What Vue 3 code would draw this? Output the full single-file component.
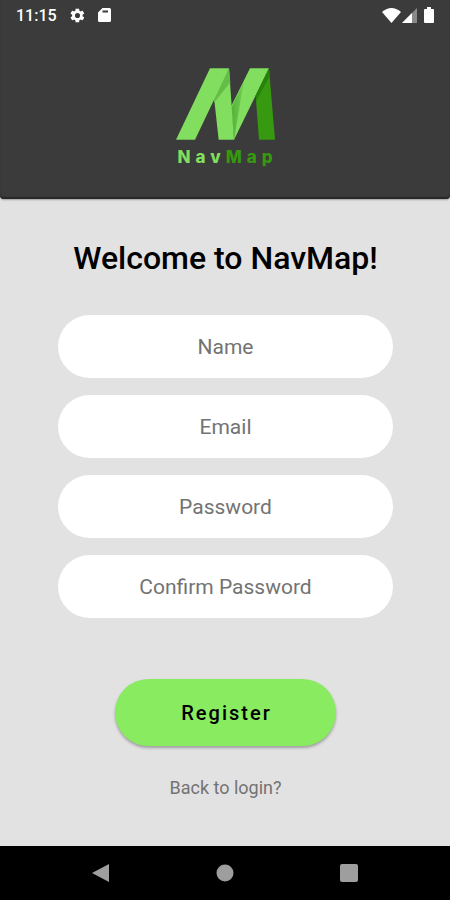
<template>
  <div class="screen">
    <header class="top">
      <div class="status-bar">
        <div class="status-left">
          <span class="clock">11:15</span>
          <svg class="icon" viewBox="0 0 24 24" aria-hidden="true">
            <path
              d="M19.1 12.9c0-.3.1-.6.1-.9s0-.6-.1-.9l2.1-1.6c.2-.1.2-.4.1-.6l-2-3.5c-.1-.2-.4-.3-.6-.2l-2.4 1c-.5-.4-1.1-.7-1.7-1l-.3-2.5c0-.2-.3-.4-.5-.4h-4c-.3 0-.5.2-.5.4l-.4 2.5c-.6.3-1.1.6-1.6 1l-2.4-1c-.2-.1-.5 0-.6.2l-2 3.5c-.1.2-.1.5.1.6l2.1 1.6c0 .3-.1.6-.1.9s0 .6.1.9l-2.1 1.6c-.2.1-.2.4-.1.6l2 3.5c.1.2.4.3.6.2l2.4-1c.5.4 1 .7 1.6 1l.4 2.5c0 .2.2.4.5.4h4c.2 0 .5-.2.5-.4l.3-2.5c.6-.3 1.2-.6 1.7-1l2.4 1c.2.1.5 0 .6-.2l2-3.5c.1-.2.1-.5-.1-.6zM12 15.6a3.6 3.6 0 1 1 0-7.2 3.6 3.6 0 0 1 0 7.2z"
            />
          </svg>
          <svg class="icon-card" viewBox="0 0 13 14" aria-hidden="true">
            <path
              fill-rule="evenodd"
              d="M4.5 0h7Q13 0 13 1.500v11q0 1.500-1.500 1.500h-10Q0 14 0 12.500V4.500zM4.500 2.500v2H10v-2z"
            />
          </svg>
        </div>
        <div class="status-right">
          <svg class="icon-wifi" viewBox="0 0 19 15" aria-hidden="true">
            <path d="M0 4Q9.500-4 19 4L9.500 15z" />
          </svg>
          <svg class="icon-signal" viewBox="0 0 15 15" aria-hidden="true">
            <path d="M15 0v15H0z" opacity="0.4" />
            <path d="M10 5v10H0z" />
          </svg>
          <svg class="icon-battery" viewBox="0 0 10 16" aria-hidden="true">
            <path d="M3 0h4v2h2q1 0 1 1v12q0 1-1 1H1q-1 0-1-1V3q0-1 1-1h2z" />
          </svg>
        </div>
      </div>

      <div class="brand">
        <svg class="logo" viewBox="0 0 297 215" aria-hidden="true">
          <defs>
            <linearGradient id="fold" x1="0" y1="0" x2="1" y2="0">
              <stop offset="0" stop-color="#56b13b" />
              <stop offset="1" stop-color="#70cf52" />
            </linearGradient>
          </defs>
          <path fill="#81de5e" d="M159 0l15 215h-46L114 88z" />
          <path fill="#65bd48" d="M159 0l4 42-49 62-1-16z" />
          <path fill="#81de5e" d="M102 0h57L57 215H0z" />
          <path fill="#81de5e" d="M222 0h57L174 215l-10-98z" />
          <path fill="url(#fold)" d="M167 117l36-75-29 173z" />
          <path fill="#36990f" d="M279 0l18 215h-48L239 82z" />
          <path fill="#27820a" d="M279 0l2 24-41 76-1-18z" />
        </svg>
        <p class="brand-name">Nav<span>Map</span></p>
      </div>
    </header>

    <main class="content">
      <h1>Welcome to NavMap!</h1>

      <form class="register-form" @submit.prevent>
        <input
          v-for="field in fields"
          :key="field.name"
          v-model="form[field.name]"
          :type="field.type"
          :name="field.name"
          :placeholder="field.label"
          :aria-label="field.label"
        />
        <button class="btn-register" type="submit">Register</button>
      </form>

      <a class="login-link" href="#login">Back to login?</a>
    </main>

    <nav class="nav-bar">
      <button type="button" aria-label="Back">
        <svg viewBox="0 0 20 20"><path d="M18 1v18L1 10z" /></svg>
      </button>
      <button type="button" aria-label="Home">
        <svg viewBox="0 0 20 20"><circle cx="10" cy="10" r="8.5" /></svg>
      </button>
      <button type="button" aria-label="Recent apps">
        <svg viewBox="0 0 20 20"><rect x="1" y="1" width="18" height="18" rx="2" /></svg>
      </button>
    </nav>
  </div>
</template>

<script setup>
import { reactive } from 'vue'

const fields = [
  { name: 'name', label: 'Name', type: 'text' },
  { name: 'email', label: 'Email', type: 'email' },
  { name: 'password', label: 'Password', type: 'password' },
  { name: 'confirm', label: 'Confirm Password', type: 'password' },
]

const form = reactive({
  name: '',
  email: '',
  password: '',
  confirm: '',
})
</script>

<style>
body {
  background: #e2e2e2;
}
</style>

<style scoped>
.screen {
  display: flex;
  flex-direction: column;
  min-height: 100vh;
  background: #e2e2e2;
  font-family: Roboto, 'Liberation Sans', sans-serif;
}

.top {
  padding-bottom: 33px;
  background: #3b3b3b;
  border-radius: 0 0 4px 4px;
  box-shadow:
    inset 0 -2px 1px #292929,
    0 1px 2px rgba(0, 0, 0, 0.3);
}

.status-bar {
  display: flex;
  justify-content: space-between;
  align-items: center;
  height: 30px;
  padding: 0 16px;
}

.status-left,
.status-right {
  display: flex;
  align-items: center;
}

.status-left {
  gap: 12px;
}

.status-right {
  gap: 1px;
}

.clock {
  color: #fff;
  font-size: 16px;
  font-weight: 500;
}

svg {
  display: block;
  fill: #fff;
}

.icon {
  width: 17px;
  height: 17px;
}

.icon-card {
  width: 13px;
  height: 14px;
}

.icon-wifi {
  width: 19px;
  height: 15px;
}

.icon-signal {
  width: 15px;
  height: 15px;
}

.icon-battery {
  width: 10px;
  height: 16px;
  margin-left: 6px;
}

.brand {
  display: flex;
  flex-direction: column;
  align-items: center;
  gap: 8px;
  padding-top: 38px;
}

.logo {
  width: 99px;
  height: 72px;
}

.brand-name {
  margin: 0;
  color: #81de5e;
  font-family: Inter, 'Open Sans', sans-serif;
  font-size: 17px;
  font-weight: 800;
  line-height: 18px;
  letter-spacing: 5px;
  text-indent: 5px;
}

.brand-name span {
  color: #36990f;
}

.content {
  flex: 1;
  display: flex;
  flex-direction: column;
  align-items: center;
  padding: 39px 57px 40px 58px;
}

h1 {
  margin: 0;
  color: #000;
  font-size: 32px;
  font-weight: 500;
  line-height: 40px;
}

.register-form {
  display: flex;
  flex-direction: column;
  gap: 17px;
  width: 100%;
  padding-top: 37px;
}

input {
  width: 100%;
  height: 63px;
  padding: 0 24px;
  box-sizing: border-box;
  border: none;
  border-radius: 32px;
  background: #fff;
  color: #333;
  font-family: inherit;
  font-size: 21px;
  text-align: center;
  outline: none;
}

input::placeholder {
  color: #737373;
  opacity: 1;
}

.btn-register {
  align-self: center;
  width: 66%;
  height: 67px;
  margin-top: 44px;
  border: none;
  border-radius: 34px;
  background: #88eb60;
  color: #000;
  font-family: inherit;
  font-size: 20px;
  font-weight: 500;
  letter-spacing: 2px;
  text-indent: 2px;
  box-shadow: 0 2px 3px rgba(0, 0, 0, 0.3);
  cursor: pointer;
}

.login-link {
  margin-top: 30px;
  color: #737373;
  font-size: 18px;
  line-height: 24px;
  text-decoration: none;
}

.nav-bar {
  display: flex;
  justify-content: center;
  gap: 104px;
  height: 54px;
  background: #000;
}

.nav-bar button {
  padding: 0;
  border: none;
  background: none;
  cursor: pointer;
}

.nav-bar svg {
  width: 20px;
  height: 20px;
  fill: #9e9e9e;
}
</style>
